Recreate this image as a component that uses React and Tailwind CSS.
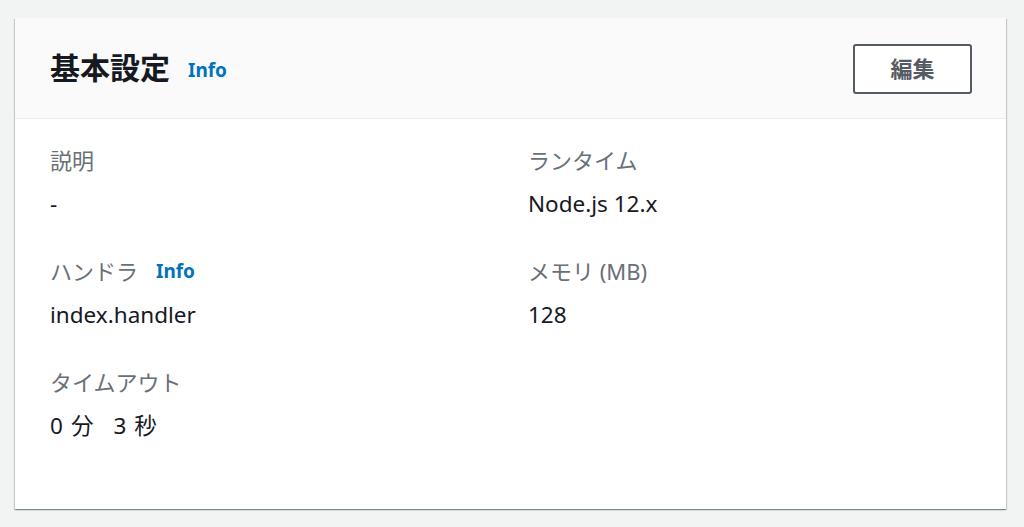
const FONT = { fontFamily: '"Noto Sans", "Noto Sans CJK JP", sans-serif' };

function InfoLink({ className = '' }) {
  return <span className={`font-bold text-[#0073bb] ${className}`}>Info</span>;
}

function Field({ label, value, info }) {
  return (
    <div className="flex flex-col">
      <div className="flex items-center gap-[18px] text-[22px] leading-[30px] text-[#687078]">
        <span>{label}</span>
        {info && <InfoLink className="text-[19px]" />}
      </div>
      <div className="mt-[14px] text-[22.5px] leading-[30px] text-[#16191f]">{value}</div>
    </div>
  );
}

export default function App() {
  return (
    <div className="min-h-[527px] bg-[#f2f3f3] pt-[18px] pl-[15px] pr-[18px]" style={FONT}>
      <div className="bg-white shadow-[0_1px_1px_0_rgba(0,28,36,0.3),1px_1px_1px_0_rgba(0,28,36,0.15),-1px_1px_1px_0_rgba(0,28,36,0.15)]">
        <div className="flex h-[101px] items-center justify-between border-b border-[#eaeded] bg-[#fafafa] pl-[35px] pr-[34px]">
          <div className="flex items-center gap-[18px]">
            <h2 className="text-[30px] font-bold leading-[36px] text-[#16191f]">基本設定</h2>
            <InfoLink className="text-[19px] mt-[4px]" />
          </div>
          <button
            type="button"
            className="mt-[1px] h-[50px] w-[119px] rounded-[3px] border-2 border-[#545b64] bg-white text-[22px] font-bold text-[#545b64]"
          >
            編集
          </button>
        </div>
        <div className="grid grid-cols-[478px_1fr] gap-y-[37px] pl-[35px] pr-[35px] pt-[26px] pb-[68px]">
          <Field label="説明" value="-" />
          <Field label="ランタイム" value="Node.js 12.x" />
          <Field label="ハンドラ" value="index.handler" info />
          <Field label="メモリ (MB)" value="128" />
          <Field
            label="タイムアウト"
            value={
              <>
                <span className="inline-flex gap-[8px]">
                  <span>0</span>
                  <span>分</span>
                </span>
                <span className="ml-[20px] inline-flex gap-[8px]">
                  <span>3</span>
                  <span>秒</span>
                </span>
              </>
            }
          />
        </div>
      </div>
    </div>
  );
}
